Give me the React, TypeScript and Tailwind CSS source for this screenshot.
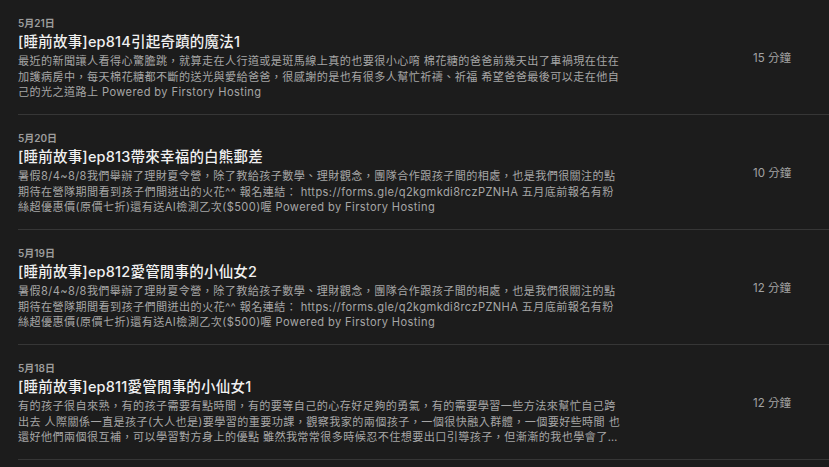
import React from 'react';

type Episode = {
  date: string;
  title: string;
  description: string;
  duration: string;
};

const camp =
  '暑假8/4~8/8我們舉辦了理財夏令營，除了教給孩子數學、理財觀念，團隊合作跟孩子間的相處，也是我們很關注的點期待在營隊期間看到孩子們間迸出的火花^^ 報名連結： https://forms.gle/q2kgmkdi8rczPZNHA 五月底前報名有粉絲超優惠價(原價七折)還有送AI檢測乙次($500)喔 Powered by Firstory Hosting';

const episodes: Episode[] = [
  {
    date: '5月21日',
    title: '[睡前故事]ep814引起奇蹟的魔法1',
    description:
      '最近的新聞讓人看得心驚膽跳，就算走在人行道或是斑馬線上真的也要很小心唷 棉花糖的爸爸前幾天出了車禍現在住在加護病房中，每天棉花糖都不斷的送光與愛給爸爸，很感謝的是也有很多人幫忙祈禱、祈福 希望爸爸最後可以走在他自己的光之道路上 Powered by Firstory Hosting',
    duration: '15 分鐘',
  },
  {
    date: '5月20日',
    title: '[睡前故事]ep813帶來幸福的白熊郵差',
    description: camp,
    duration: '10 分鐘',
  },
  {
    date: '5月19日',
    title: '[睡前故事]ep812愛管閒事的小仙女2',
    description: camp,
    duration: '12 分鐘',
  },
  {
    date: '5月18日',
    title: '[睡前故事]ep811愛管閒事的小仙女1',
    description:
      '有的孩子很自來熟，有的孩子需要有點時間，有的要等自己的心存好足夠的勇氣，有的需要學習一些方法來幫忙自己跨出去 人際關係一直是孩子(大人也是)要學習的重要功課，觀察我家的兩個孩子，一個很快融入群體，一個要好些時間 也還好他們兩個很互補，可以學習對方身上的優點 雖然我常常很多時候忍不住想要出口引導孩子，但漸漸的我也學會了放手，讓孩子自己去面對、去學習，相信他們會找到屬於自己的方式',
    duration: '12 分鐘',
  },
];

function EpisodeRow({ ep }: { ep: Episode }) {
  return (
    <li className="flex items-center border-b border-[#363636] pt-4 pb-[13.5px]">
      <div className="w-[605px] shrink-0">
        <p className="text-[10px] leading-[14px] font-semibold text-[#9c9c9c]">{ep.date}</p>
        <h3 className="text-[14.5px] leading-6 font-medium tracking-[0.2px] text-[#f0f0f0] whitespace-nowrap">
          {ep.title}
        </h3>
        <p className="text-[11.1px] leading-[15.5px] tracking-[0.4px] text-[#a6a6a6] line-clamp-3">
          {ep.description}
        </p>
      </div>
      <div className="ml-auto w-[76px] shrink-0 text-[11.5px] text-[#a3a3a3]">{ep.duration}</div>
    </li>
  );
}

export default function App() {
  return (
    <div
      className="min-h-screen w-[829px] bg-[#1c1c1c] pl-[18px] overflow-hidden"
      style={{ fontFamily: 'Inter, "Noto Sans CJK TC", sans-serif' }}
    >
      <ul>
        {episodes.map((ep) => (
          <EpisodeRow key={ep.title} ep={ep} />
        ))}
      </ul>
    </div>
  );
}
